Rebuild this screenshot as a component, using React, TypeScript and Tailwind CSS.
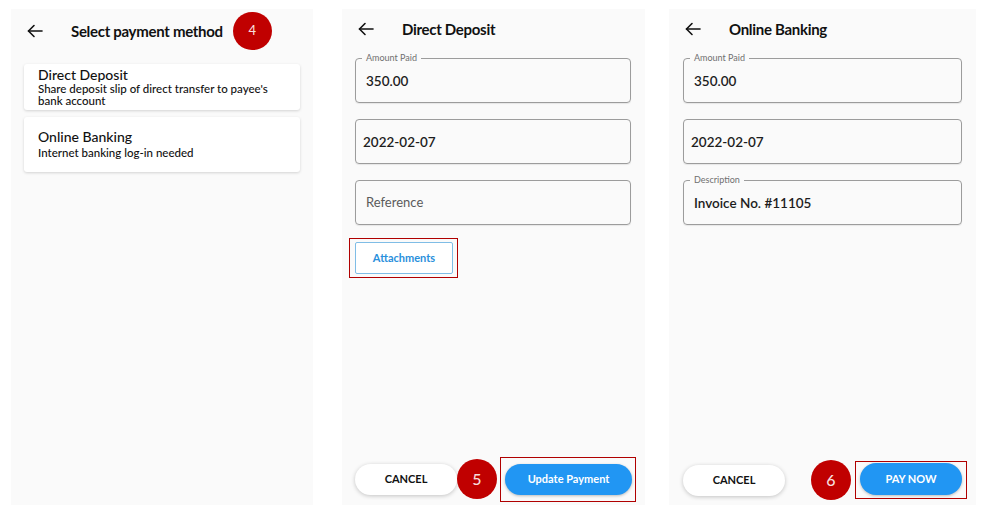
import type { ReactNode } from 'react';

const font = { fontFamily: 'Lato, "Noto Sans", sans-serif' };

function BackArrow() {
  return (
    <svg width="16" height="14" viewBox="0 0 16 14" fill="none" stroke="#111" strokeWidth="1.6" strokeLinecap="round" strokeLinejoin="round">
      <path d="M15 7H1.5" />
      <path d="M7 1.5L1.5 7L7 12.5" />
    </svg>
  );
}

function Badge({ n, size = 'w-[40px] h-[40px] text-[16px]' }: { n: string; size?: string }) {
  return (
    <div className={`${size} shrink-0 rounded-full bg-[#c00000] text-[#f7dcdc] flex items-center justify-center font-medium`}>
      {n}
    </div>
  );
}

function Header({ title, h = 'h-[44px]', children }: { title: string; h?: string; children?: ReactNode }) {
  return (
    <div className={`${h} flex items-center pl-[16px] shrink-0`}>
      <BackArrow />
      <h1 className="ml-[28px] text-[15px] font-bold text-[#111] tracking-[-0.3px]">{title}</h1>
      {children}
    </div>
  );
}

function Field({ label, value, placeholder, indent = 'pl-[10px]' }: { label?: string; value?: string; placeholder?: string; indent?: string }) {
  return (
    <div className={`relative h-[45px] border border-[#9c9c9c] rounded-[4px] flex items-center ${indent} shadow-[0_1px_1px_rgba(0,0,0,0.08)]`}>
      {label && (
        <span className="absolute -top-[6px] left-[6px] px-[4px] bg-[#fafafa] text-[9px] leading-[10px] text-[#707070]">
          {label}
        </span>
      )}
      {value ? (
        <span className="text-[13.5px] font-semibold text-[#1d1d1d] pt-[2px]">{value}</span>
      ) : (
        <span className="text-[13px] text-[#5a5a5a] pt-[1px]">{placeholder}</span>
      )}
    </div>
  );
}

function Cancel() {
  return (
    <button type="button" className="w-[102px] h-[31px] rounded-full bg-white shadow-[0_1px_4px_rgba(0,0,0,0.22)] text-[11px] font-bold text-[#111] shrink-0">
      CANCEL
    </button>
  );
}

export default function App() {
  return (
    <div className="w-[991px] h-[531px] bg-white flex items-start pl-[11px] pt-[9px]" style={font}>
      {/* select method */}
      <div className="w-[302px] h-[496px] bg-[#fafafa] flex flex-col">
        <Header title="Select payment method">
          <div className="ml-[10px]">
            <Badge n="4" size="w-[39px] h-[38px] text-[13px]" />
          </div>
        </Header>
        <div className="mx-[13px] mt-[11px] flex flex-col gap-[7px]">
          <div className="bg-white rounded-[3px] shadow-[0_1px_3px_rgba(0,0,0,0.16)] h-[46px] px-[14px] pt-[3px]">
            <div className="text-[14px] leading-[16px] font-medium text-[#111]">Direct Deposit</div>
            <div className="text-[11.5px] leading-[12px] font-medium text-[#111]">
              <span className="block whitespace-nowrap">Share deposit slip of direct transfer to payee's</span>
              <span className="block">bank account</span>
            </div>
          </div>
          <div className="bg-white rounded-[3px] shadow-[0_1px_3px_rgba(0,0,0,0.16)] h-[55px] px-[14px] pt-[12px]">
            <div className="text-[14px] leading-[16px] font-medium text-[#111]">Online Banking</div>
            <div className="mt-[2px] text-[11.5px] leading-[12px] font-medium text-[#111]">Internet banking log-in needed</div>
          </div>
        </div>
      </div>

      {/* direct deposit */}
      <div className="ml-[29px] w-[303px] h-[496px] bg-[#fafafa] flex flex-col">
        <Header title="Direct Deposit" h="h-[40px]" />
        <div className="ml-[13px] mr-[14px] mt-[9px] flex flex-col gap-[16px]">
          <Field label="Amount Paid" value="350.00" />
          <Field value="2022-02-07" indent="pl-[7px]" />
          <Field placeholder="Reference" />
        </div>
        <div className="ml-[7px] mt-[13px] w-fit border border-[#b00000] pl-[5px] pr-[4px] py-[3px]">
          <button type="button" className="w-[98px] h-[32px] border-[1.5px] border-[#7fbde6] rounded-[2px] bg-white text-[11px] font-bold text-[#2a90dc]">
            Attachments
          </button>
        </div>
        <div className="mt-auto h-[52px] flex items-center pl-[13px]">
          <Cancel />
          <Badge n="5" />
          <div className="ml-[3px] border border-[#b00000] pl-[4px] pr-[3px] py-[6px]">
            <button type="button" className="w-[127px] h-[31px] rounded-full bg-[#2196f3] shadow-[0_1px_3px_rgba(0,0,0,0.25)] text-[11px] font-bold text-white">
              Update Payment
            </button>
          </div>
        </div>
      </div>

      {/* online banking */}
      <div className="ml-[24px] w-[307px] h-[496px] bg-[#fafafa] flex flex-col">
        <Header title="Online Banking" h="h-[40px]" />
        <div className="mx-[14px] mt-[9px] flex flex-col gap-[16px]">
          <Field label="Amount Paid" value="350.00" />
          <Field value="2022-02-07" indent="pl-[7px]" />
          <Field label="Description" value="Invoice No. #11105" />
        </div>
        <div className="mt-auto h-[50px] flex items-center pl-[14px]">
          <Cancel />
          <div className="ml-[26px]">
            <Badge n="6" />
          </div>
          <div className="ml-[4px] border border-[#b00000] px-[4px] pt-[1px] pb-[3px]">
            <button type="button" className="w-[102px] h-[32px] rounded-full bg-[#2196f3] shadow-[0_1px_3px_rgba(0,0,0,0.25)] text-[11px] font-bold text-white">
              PAY NOW
            </button>
          </div>
        </div>
      </div>
    </div>
  );
}
